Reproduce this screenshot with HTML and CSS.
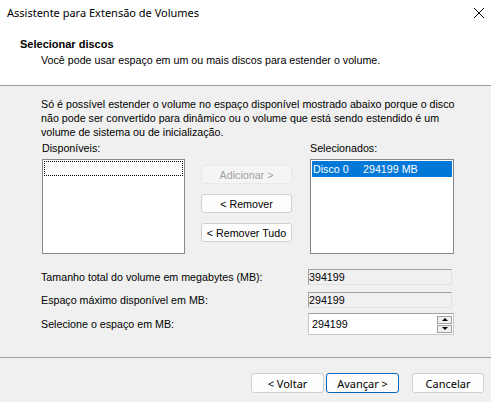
FILE: index.html
```html
<!DOCTYPE html>
<html lang="pt-BR">
<head>
  <meta charset="UTF-8" />
  <title>Assistente para Extensão de Volumes</title>
  <link rel="stylesheet" href="styles.css">
</head>
<body>
  <div class="window">
    <div class="titlebar">
      <span class="title">Assistente para Extensão de Volumes</span>
      <svg class="close" width="12" height="12" viewBox="0 0 12 12">
        <path d="M1 1 L11 11 M11 1 L1 11" stroke="#000" stroke-width="1" fill="none"/>
      </svg>
    </div>

    <div class="header">
      <div class="header-title">Selecionar discos</div>
      <div class="header-sub">Você pode usar espaço em um ou mais discos para estender o volume.</div>
    </div>

    <div class="content">
      <p class="intro">Só é possível estender o volume no espaço disponível mostrado abaixo porque o disco<br>não pode ser convertido para dinâmico ou o volume que está sendo estendido é um<br>volume de sistema ou de inicialização.</p>

      <div class="lists">
        <div class="list-col">
          <div class="list-label">Disponíveis:</div>
          <div class="listbox">
            <div class="focus-row"></div>
          </div>
        </div>

        <div class="move-buttons">
          <button class="btn" disabled>Adicionar &gt;</button>
          <button class="btn">&lt; Remover</button>
          <button class="btn">&lt; Remover Tudo</button>
        </div>

        <div class="list-col right">
          <div class="list-label">Selecionados:</div>
          <div class="listbox">
            <div class="item selected"><span class="disk">Disco 0</span><span>294199 MB</span></div>
          </div>
        </div>
      </div>

      <div class="fields">
        <div class="field-row">
          <span class="field-label">Tamanho total do volume em megabytes (MB):</span>
          <div class="readonly">394199</div>
        </div>
        <div class="field-row">
          <span class="field-label">Espaço máximo disponível em MB:</span>
          <div class="readonly">294199</div>
        </div>
        <div class="field-row spin-row">
          <span class="field-label">Selecione o espaço em MB:</span>
          <div class="spin">
            <span class="spin-value">294199</span>
            <div class="spin-buttons">
              <div class="spin-btn"><span class="arrow-up"></span></div>
              <div class="spin-btn"><span class="arrow-down"></span></div>
            </div>
          </div>
        </div>
      </div>
    </div>

    <div class="footer">
      <button class="btn wide">&lt; Voltar</button>
      <button class="btn wide default">Avançar &gt;</button>
      <button class="btn wide cancel">Cancelar</button>
    </div>
  </div>
</body>
</html>
```

FILE: styles.css
```css
body {
  margin: 0;
  padding: 0;
  background: #f0f0f0;
  font-family: "Liberation Sans", Arial, sans-serif;
  font-size: 10.7px;
  color: #000;
}

.window {
  width: 491px;
  height: 402px;
  background: #f0f0f0;
  overflow: hidden;
}

.titlebar {
  height: 25px;
  background: #fff;
  display: flex;
  align-items: center;
  justify-content: space-between;
  padding: 0 6px 0 7px;
}

.title {
  font-family: "Noto Sans", sans-serif;
  font-size: 11px;
}

.header {
  height: 61px;
  box-sizing: border-box;
  background: #fff;
  border-bottom: 1px solid #a0a0a0;
  padding-top: 12px;
}

.header-title {
  font-weight: bold;
  font-size: 11px;
  line-height: 14px;
  padding-left: 20px;
}

.header-sub {
  line-height: 14px;
  margin-top: 2px;
  padding-left: 41px;
}

.content {
  height: 272px;
  box-sizing: border-box;
  border-bottom: 1px solid #a0a0a0;
  padding: 11px 0 0 41px;
}

.intro {
  margin: 0;
  white-space: nowrap;
  line-height: 14px;
}

.lists {
  display: flex;
  margin-top: 2px;
}

.list-col {
  width: 143px;
  margin-left: 1px;
}

.list-col.right {
  width: 144px;
  margin-left: 18px;
}

.list-label {
  line-height: 14px;
  margin-bottom: 4px;
}

.listbox {
  height: 95px;
  box-sizing: border-box;
  background: #fff;
  border: 1px solid #828790;
  padding: 1px;
}

.focus-row {
  height: 15px;
  box-sizing: border-box;
  border: 1px dotted #000;
}

.item {
  height: 16px;
  line-height: 16px;
  padding-left: 1px;
  display: flex;
}

.item.selected {
  background: #0078d7;
  color: #fff;
}

.disk {
  width: 50px;
}

.move-buttons {
  display: flex;
  flex-direction: column;
  gap: 10px;
  margin-left: 16px;
  padding-top: 24px;
}

.btn {
  font-family: "Liberation Sans", Arial, sans-serif;
  font-size: 10.7px;
  color: #000;
  width: 91px;
  height: 19px;
  padding: 0;
  background: #fdfdfd;
  border: 1px solid #d0d0d0;
  border-radius: 3px;
}

.btn:disabled {
  background: #f5f5f5;
  border-color: #e8e8e8;
  color: #a0a0a0;
}

.fields {
  margin-top: 15px;
  display: flex;
  flex-direction: column;
}

.field-row {
  display: flex;
  align-items: center;
  height: 16px;
  margin-bottom: 7px;
}

.field-row + .field-row.spin-row {
  margin-top: -2px;
  height: 22px;
}

.field-label {
  width: 267px;
}

.readonly {
  width: 144px;
  height: 16px;
  box-sizing: border-box;
  border-top: 1px solid #a0a0a0;
  border-left: 1px solid #a0a0a0;
  border-right: 1px solid #e3e3e3;
  border-bottom: 1px solid #e3e3e3;
  line-height: 14px;
}

.spin {
  width: 146px;
  height: 22px;
  box-sizing: border-box;
  background: #fff;
  border: 1px solid #c8c8c8;
  border-top-color: #a0a0a0;
  display: flex;
  align-items: center;
  justify-content: space-between;
  padding-left: 3px;
  padding-right: 1px;
}

.spin-buttons {
  display: flex;
  flex-direction: column;
  gap: 1px;
}

.spin-btn {
  width: 15px;
  height: 8px;
  box-sizing: border-box;
  background: #f0f0f0;
  border: 1px solid #a0a0a0;
  display: flex;
  align-items: center;
  justify-content: center;
}

.arrow-up {
  border-left: 3px solid transparent;
  border-right: 3px solid transparent;
  border-bottom: 3px solid #000;
}

.arrow-down {
  border-left: 3px solid transparent;
  border-right: 3px solid transparent;
  border-top: 3px solid #000;
}

.footer {
  display: flex;
  justify-content: flex-end;
  padding: 15px 7px 0 0;
}

.btn.wide {
  width: 73px;
  height: 20px;
  margin-left: 2px;
  font-family: "Noto Sans", sans-serif;
  font-size: 11px;
}

.btn.default {
  border-color: #0067c0;
}

.btn.cancel {
  width: 72px;
  margin-left: 13px;
}
```
